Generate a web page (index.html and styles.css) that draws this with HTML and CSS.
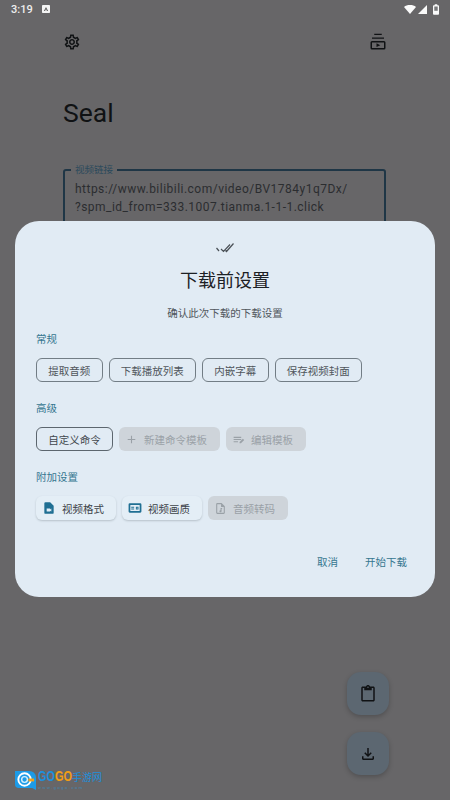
FILE: index.html
```html
<!DOCTYPE html>
<html lang="zh-CN">
<head>
  <meta charset="UTF-8" />
  <title>Seal</title>
  <meta name="viewport" content="width=device-width, initial-scale=1" />
  <link rel="stylesheet" href="styles.css">
</head>
<body>
  <div class="status">
    <div class="status-left">
      <span class="time">3:19</span>
      <svg class="notif" viewBox="0 0 10 10"><path fill="#f4f4f4" d="M1 0h8a1 1 0 0 1 1 1v8a1 1 0 0 1-1 1H1a1 1 0 0 1-1-1V1a1 1 0 0 1 1-1z"/><path fill="#555" d="M5 2.400 7.600 7.600H6.200L5 5 3.800 7.600H2.400z"/></svg>
    </div>
    <div class="status-right">
      <svg class="wifi" viewBox="0 0 16 12"><path fill="#fafafa" d="M0 2.600C2 .9 4.800 0 8 0s6 .9 8 2.600L8 12z"/></svg>
      <svg class="signal" viewBox="0 0 11 11"><path fill="#fafafa" d="M11 0v11H0z"/></svg>
      <svg class="battery" viewBox="0 0 7 12"><path fill="#fafafa" d="M2 0h3v1h1a1 1 0 0 1 1 1v9a1 1 0 0 1-1 1H1a1 1 0 0 1-1-1V2a1 1 0 0 1 1-1h1z"/><path fill="#77787a" d="M1.500 2.500h4v5h-4z"/></svg>
    </div>
  </div>

  <div class="toolbar">
    <svg class="icon" viewBox="0 0 24 24"><path d="M19.43 12.98c.04-.32.07-.64.07-.98 0-.34-.03-.66-.07-.98l2.110-1.650c.19-.15.24-.42.12-.64l-2-3.460c-.09-.16-.26-.25-.44-.25-.06 0-.12.01-.17.03l-2.490 1c-.52-.4-1.080-.73-1.690-.98l-.38-2.650C14.460 2.180 14.250 2 14 2h-4c-.25 0-.46.18-.49.42l-.38 2.650c-.61.25-1.170.59-1.690.98l-2.490-1c-.06-.02-.12-.03-.18-.03-.17 0-.34.09-.43.25l-2 3.460c-.13.22-.07.49.12.64l2.110 1.650c-.04.32-.07.65-.07.98 0 .33.03.66.07.98l-2.110 1.650c-.19.15-.24.42-.12.64l2 3.460c.09.16.26.25.44.25.06 0 .12-.01.17-.03l2.490-1c.52.4 1.080.73 1.690.98l.38 2.650c.03.24.24.42.49.42h4c.25 0 .46-.18.49-.42l.38-2.650c.61-.25 1.170-.59 1.690-.98l2.490 1c.06.02.12.03.18.03.17 0 .34-.09.43-.25l2-3.460c.12-.22.07-.49-.12-.64l-2.110-1.650zm-1.980-1.710c.04.31.05.52.05.73 0 .21-.02.43-.05.73l-.14 1.130.89.7 1.080.84-.7 1.210-1.270-.51-1.040-.42-.9.68c-.43.32-.84.56-1.250.73l-1.060.43-.16 1.130-.2 1.350h-1.400l-.19-1.350-.16-1.130-1.060-.43c-.43-.18-.83-.41-1.230-.71l-.91-.7-1.060.43-1.270.51-.7-1.210 1.080-.84.89-.7-.14-1.130c-.03-.31-.05-.54-.05-.74s.02-.43.05-.73l.14-1.130-.89-.7-1.080-.84.7-1.210 1.270.51 1.040.42.9-.68c.43-.32.84-.56 1.250-.73l1.060-.43.16-1.130.2-1.350h1.390l.19 1.350.16 1.130 1.060.43c.43.18.83.41 1.230.71l.91.7 1.060-.43 1.270-.51.7 1.210-1.070.85-.89.7.14 1.130zM12 8c-2.210 0-4 1.790-4 4s1.790 4 4 4 4-1.790 4-4-1.790-4-4-4zm0 6c-1.100 0-2-.9-2-2s.9-2 2-2 2 .9 2 2-.9 2-2 2z"/></svg>
    <svg class="icon" viewBox="0 0 24 24"><path d="M7 1h10v1.600H7zM4 6h16v1.600H4z"/><path fill-rule="evenodd" d="M4 10.500h16a2 2 0 0 1 2 2V20a2 2 0 0 1-2 2H4a2 2 0 0 1-2-2v-7.500a2 2 0 0 1 2-2zm0 2V20h16v-7.500z"/><path d="m10 13.700 5 2.500-5 2.500z"/></svg>
  </div>

  <h1 class="title">Seal</h1>

  <div class="url-field">
    <span class="url-label">视频链接</span>
    <p class="url-text">https://www.bilibili.com/video/BV1784y1q7Dx/<br>?spm_id_from=333.1007.tianma.1-1-1.click</p>
  </div>

  <div class="fabs">
    <div class="fab">
      <svg class="icon" viewBox="0 0 24 24"><path d="M19 2h-4.180C14.400.84 13.300 0 12 0c-1.300 0-2.400.84-2.820 2H5c-1.100 0-2 .9-2 2v16c0 1.100.9 2 2 2h14c1.100 0 2-.9 2-2V4c0-1.100-.9-2-2-2zm-7 0c.55 0 1 .45 1 1s-.45 1-1 1-1-.45-1-1 .45-1 1-1zm7 18H5V4h2v3h10V4h2v16z"/></svg>
    </div>
    <div class="fab">
      <svg class="icon" viewBox="0 0 24 24"><path d="M18 15v3H6v-3H4v3c0 1.100.9 2 2 2h12c1.100 0 2-.9 2-2v-3h-2zm-1-4-1.410-1.410L13 12.170V4h-2v8.170L8.410 9.590 7 11l5 5 5-5z"/></svg>
    </div>
  </div>

  <div class="watermark">
    <svg class="wm-logo" viewBox="0 0 22 22">
      <path fill="#1c9be8" d="M0 2h15a7 7 0 0 1 7 7v13l-4-2H4a4 4 0 0 1-4-4z"/>
      <circle cx="10" cy="11" r="6.500" fill="none" stroke="#fff" stroke-width="2"/>
      <circle cx="10" cy="11" r="3" fill="none" stroke="#d6effc" stroke-width="1.500"/>
      <path fill="#f2a21c" d="M14 10h6v3h-6z"/>
    </svg>
    <div class="wm-text">
      <div class="wm-name"><span class="wm-latin"><span class="wm-blue">GO</span><span class="wm-orange">GO</span></span><span class="wm-cn">手游网</span></div>
      <div class="wm-url">www.gogo.com</div>
    </div>
  </div>

  <div class="dialog">
    <svg class="dialog-icon" viewBox="0 0 18 10"><path d="M.5 5 3 8M5 6 7.500 8.500 14 1.500M9.500 7.500 10.500 8.500 17.500 .5" fill="none" stroke="#4a5056" stroke-width="1.200"/></svg>
    <h2 class="dialog-title">下载前设置</h2>
    <p class="dialog-sub">确认此次下载的下载设置</p>

    <div class="section-label first">常规</div>
    <div class="chips">
      <span class="chip">提取音频</span>
      <span class="chip">下载播放列表</span>
      <span class="chip">内嵌字幕</span>
      <span class="chip">保存视频封面</span>
    </div>

    <div class="section-label">高级</div>
    <div class="chips">
      <span class="chip selected">自定义命令</span>
      <span class="chip disabled">
        <svg class="chip-icon" viewBox="0 0 24 24"><path d="M19 13h-6v6h-2v-6H5v-2h6V5h2v6h6v2z"/></svg>新建命令模板
      </span>
      <span class="chip disabled">
        <svg class="chip-icon" viewBox="0 0 24 24"><path d="M3 7h14v2H3zM3 11h14v2H3zM3 15h8v2H3zM14 19v-2.500l6-6 2.500 2.500-6 6z"/></svg>编辑模板
      </span>
    </div>

    <div class="section-label">附加设置</div>
    <div class="chips">
      <span class="chip elevated">
        <svg class="chip-icon blue" viewBox="0 0 24 24"><path fill-rule="evenodd" d="M6 2h8l6 6v12a2 2 0 0 1-2 2H6a2 2 0 0 1-2-2V4a2 2 0 0 1 2-2zm2 11v5h6v-1.500l2 1.500v-5l-2 1.500V13z"/></svg>视频格式
      </span>
      <span class="chip elevated">
        <svg class="chip-icon blue" viewBox="0 0 24 24"><path fill-rule="evenodd" d="M3 4h18a2 2 0 0 1 2 2v12a2 2 0 0 1-2 2H3a2 2 0 0 1-2-2V6a2 2 0 0 1 2-2zm1 3v10h16V7zm1.500 3h5v1.500h-5zm0 3h5v1.500h-5zm8-3H18v4.500h-4.500zm1.500 1.500v1.500h1.500v-1.500z"/></svg>视频画质
      </span>
      <span class="chip disabled">
        <svg class="chip-icon" viewBox="0 0 24 24"><path fill-rule="evenodd" d="M6 2h8l6 6v12a2 2 0 0 1-2 2H6a2 2 0 0 1-2-2V4a2 2 0 0 1 2-2zm0 2v16h12V9h-5V4zm6 7h3v2h-1v4a2 2 0 1 1-2-2z"/></svg>音频转码
      </span>
    </div>

    <div class="actions">
      <span class="action">取消</span>
      <span class="action">开始下载</span>
    </div>
  </div>
</body>
</html>
```

FILE: styles.css
```css
:root {
  --scrim-bg: #676668;
  --ink: #101214;
  --dialog-bg: #e1ebf4;
  --teal: #35768f;
  --chip-border: #727d85;
  --chip-text: #50565c;
  --disabled-bg: #ced4da;
  --disabled-text: #9aa1a7;
}
* {
  box-sizing: border-box;
}
html, body {
  height: 100%;
}
body {
  margin: 0;
  overflow: hidden;
  position: relative;
  background: var(--scrim-bg);
  color: var(--ink);
  font-family: Roboto, "Noto Sans CJK SC", sans-serif;
}
.status {
  height: 18px;
  padding: 0 11px;
  display: flex;
  justify-content: space-between;
  align-items: center;
}
.status-left, .status-right {
  display: flex;
  align-items: center;
}
.time {
  color: #eee;
  font-size: 11px;
  font-weight: 500;
}
.notif {
  width: 8px;
  height: 8px;
  margin-left: 9px;
}
.wifi {
  width: 12px;
  height: 9px;
}
.signal {
  width: 9px;
  height: 9px;
  margin-left: 2px;
}
.battery {
  width: 6px;
  height: 11px;
  margin-left: 6px;
}
.toolbar {
  height: 20px;
  margin-top: 14px;
  padding: 0 63px;
  display: flex;
  justify-content: space-between;
  align-items: center;
}
.icon {
  width: 18px;
  height: 18px;
  fill: var(--ink);
}
.title {
  margin: 43px 0 0 63px;
  font-size: 26.5px;
  line-height: 36px;
  font-weight: 400;
}
.url-field {
  position: relative;
  margin: 38px 64px 0 63px;
  height: 90px;
  border: 2px solid #1f3646;
  border-radius: 3px;
  padding: 9px 10px;
}
.url-label {
  position: absolute;
  top: -7px;
  left: 6px;
  padding: 0 4px;
  background: var(--scrim-bg);
  color: #2c4a5c;
  font-size: 9.5px;
  line-height: 12px;
}
.url-text {
  margin: 0;
  font-size: 12px;
  line-height: 18px;
  letter-spacing: 0.48px;
  color: #2b2d30;
  white-space: nowrap;
}
.fabs {
  position: absolute;
  top: 672px;
  left: 347px;
  display: flex;
  flex-direction: column;
  gap: 17px;
}
.fab {
  width: 42px;
  height: 43px;
  border-radius: 14px;
  background: #5c6771;
  box-shadow: 0 2px 5px rgba(0,0,0,0.22);
  display: flex;
  align-items: center;
  justify-content: center;
}
.watermark {
  position: absolute;
  left: 15px;
  top: 769px;
  display: flex;
  gap: 2px;
  align-items: center;
}
.wm-logo {
  width: 21px;
  height: 21px;
}
.wm-text {
  display: flex;
  flex-direction: column;
}
.wm-name {
  font-family: "Liberation Sans", "Noto Sans CJK SC", sans-serif;
  font-size: 15px;
  line-height: 14px;
  font-weight: 700;
  white-space: nowrap;
}
.wm-latin {
  display: inline-block;
  width: 34px;
  transform: scaleX(0.73);
  transform-origin: left;
}
.wm-blue {
  color: #1d8fdc;
}
.wm-orange {
  color: #f29e14;
}
.wm-cn {
  color: #1d8fdc;
  font-size: 10px;
  font-weight: 400;
}
.wm-url {
  color: #3e86b4;
  font-size: 4px;
  line-height: 5px;
  letter-spacing: 1.5px;
}
.dialog {
  position: absolute;
  top: 221px;
  left: 15px;
  width: 420px;
  height: 376px;
  padding: 22px 21px 0;
  border-radius: 24px;
  background: var(--dialog-bg);
}
.dialog-icon {
  display: block;
  width: 18px;
  height: 10px;
  margin: 0 auto;
}
.dialog-title {
  margin: 15px 0 0;
  font-size: 18px;
  line-height: 26px;
  font-weight: 400;
  text-align: center;
  color: #1c2024;
}
.dialog-sub {
  margin: 13px 0 0;
  font-size: 10.5px;
  line-height: 14px;
  text-align: center;
  color: #50565c;
}
.section-label {
  margin-top: 20px;
  font-size: 10.5px;
  line-height: 14px;
  color: var(--teal);
}
.section-label.first {
  margin-top: 12px;
}
.chips {
  display: flex;
  gap: 6px;
  margin-top: 11px;
}
.chip {
  height: 24px;
  padding: 0 11.25px;
  display: flex;
  align-items: center;
  border: 1px solid var(--chip-border);
  border-radius: 6px;
  font-size: 10.5px;
  color: var(--chip-text);
  white-space: nowrap;
}
.chip.selected {
  border-color: #5c666e;
  color: #41474d;
}
.chip.disabled {
  border: none;
  background: var(--disabled-bg);
  color: var(--disabled-text);
  padding: 0 13px 0 6px;
}
.chip.elevated {
  border: none;
  background: #e4eef6;
  box-shadow: 0 1px 2px rgba(60,70,80,0.25);
  color: #3d4349;
  padding: 0 12px 0 6px;
}
.chip-icon {
  width: 13px;
  height: 13px;
  margin-right: 6px;
  fill: var(--disabled-text);
}
.chip.elevated .chip-icon {
  width: 14px;
  height: 14px;
}
.chip-icon.blue {
  fill: #1f6f93;
}
.actions {
  display: flex;
  justify-content: flex-end;
  gap: 27px;
  margin-top: 36px;
  padding-right: 7px;
}
.action {
  font-size: 10.5px;
  line-height: 14px;
  color: var(--teal);
}
```
